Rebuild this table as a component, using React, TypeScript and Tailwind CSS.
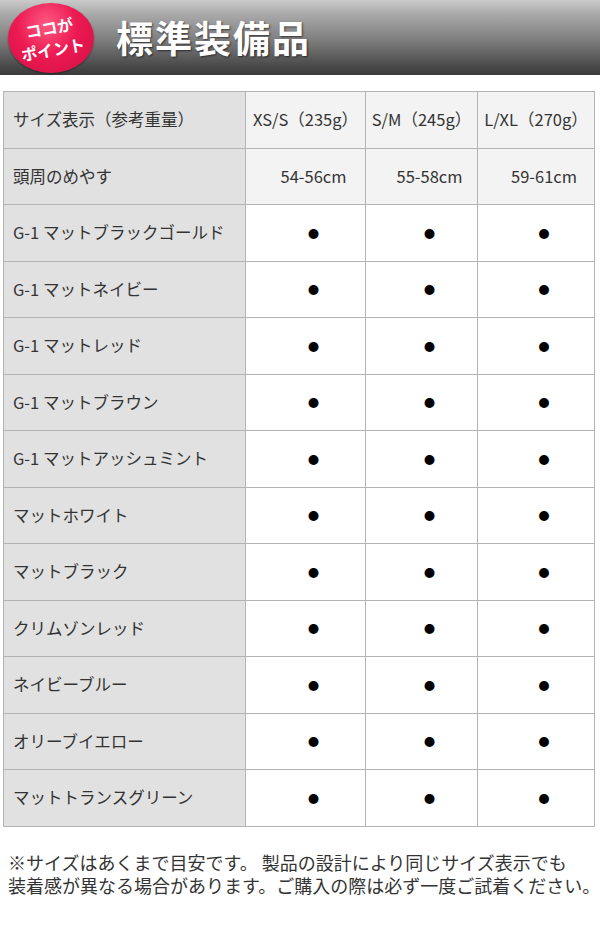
const sizes = ["XS/S（235g）", "S/M（245g）", "L/XL（270g）"];
const heads = ["54-56cm", "55-58cm", "59-61cm"];
const colors = [
  "G-1 マットブラックゴールド",
  "G-1 マットネイビー",
  "G-1 マットレッド",
  "G-1 マットブラウン",
  "G-1 マットアッシュミント",
  "マットホワイト",
  "マットブラック",
  "クリムゾンレッド",
  "ネイビーブルー",
  "オリーブイエロー",
  "マットトランスグリーン",
];

const font = { fontFamily: '"Noto Sans CJK JP", "Noto Sans", sans-serif' };

export default function App() {
  return (
    <div className="w-[600px] h-[925px] bg-white text-[#333]" style={font}>
      {/* header bar */}
      <div className="h-[75px] flex items-center bg-[linear-gradient(to_bottom,#cacaca_0%,#a8a8a8_20%,#7c7c7c_55%,#4e4e4e_85%,#3a3a3a_100%)]">
        <div className="ml-[8px] w-[86px] h-[70px] rounded-[50%] bg-[radial-gradient(ellipse_at_45%_30%,#ff5a82_0%,#ec1a52_45%,#d00f42_100%)] flex flex-col items-center justify-center shadow-[0_1px_2px_rgba(0,0,0,0.4)]">
          <div className="-rotate-[10deg] flex flex-col items-center gap-[2px] text-white font-bold text-[16px] leading-[20px]">
            <span>ココが</span>
            <span>ポイント</span>
          </div>
        </div>
        <h1 className="ml-[22px] text-white font-bold text-[37px] leading-none tracking-[2px] [text-shadow:1px_1px_2px_rgba(0,0,0,0.6)]">
          標準装備品
        </h1>
      </div>

      {/* table */}
      <table className="mt-[16px] ml-[3px] border-collapse text-[16.5px]">
        <tbody>
          <tr className="h-[56.5px]">
            <td className="w-[242px] border border-[#b4b4b4] bg-[#e1e1e1] pl-[9px]">サイズ表示（参考重量）</td>
            {sizes.map((s, i) => (
              <td
                key={s}
                className={`border border-[#b4b4b4] bg-[#f3f3f3] text-center whitespace-nowrap ${
                  i === 0 ? "w-[120px]" : i === 1 ? "w-[112px]" : "w-[117px]"
                }`}
              >
                {s}
              </td>
            ))}
          </tr>
          <tr className="h-[56.5px]">
            <td className="border border-[#b4b4b4] bg-[#e1e1e1] pl-[9px]">頭周のめやす</td>
            {heads.map((h) => (
              <td key={h} className="border border-[#b4b4b4] bg-[#f3f3f3] text-center pl-[16px]">
                {h}
              </td>
            ))}
          </tr>
          {colors.map((c) => (
            <tr key={c} className="h-[56.5px]">
              <td className="border border-[#b4b4b4] bg-[#e1e1e1] pl-[9px] whitespace-nowrap">{c}</td>
              {[0, 1, 2].map((i) => (
                <td key={i} className="border border-[#b4b4b4] bg-white text-center pl-[16px] text-black text-[11px]">
                  ●
                </td>
              ))}
            </tr>
          ))}
        </tbody>
      </table>

      <div className="mt-[24px] ml-[8px] flex flex-col text-[18px] leading-[22px] text-[#333] whitespace-nowrap">
        <span>※サイズはあくまで目安です。 製品の設計により同じサイズ表示でも</span>
        <span className="mt-[1px]">装着感が異なる場合があります。ご購入の際は必ず一度ご試着ください。</span>
      </div>
    </div>
  );
}
